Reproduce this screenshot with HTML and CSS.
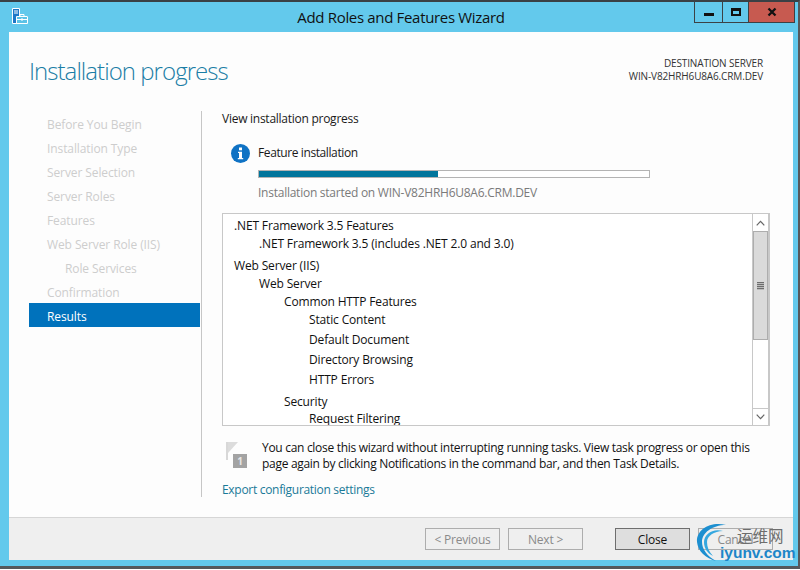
FILE: index.html
```html
<!DOCTYPE html>
<html lang="en">
<head>
<meta charset="utf-8">
<title>Add Roles and Features Wizard</title>
<link rel="stylesheet" href="styles.css">
</head>
<body>
<div class="window">
  <header class="titlebar">
    <svg class="app-icon" width="17" height="17" viewBox="0 0 17 17">
      <path d="M1.500 .5h7v15h-7z" fill="#1f78c8" stroke="#fff"/>
      <path d="M3 3h4M3 5h4" stroke="#fff"/>
      <path d="M5.500 8.500h10.500a.5 .5 0 0 1 .5 .5v6.500h-11z" fill="#5cc2e6" stroke="#fff"/>
      <path d="M9 8V6.500h4V8M6 11.500h10" stroke="#fff" fill="none"/>
      <path d="M10 10.500h2v2h-2z" fill="#fff"/>
    </svg>
    <div class="title">Add Roles and Features Wizard</div>
    <div class="controls">
      <div class="ctl ctl-min"><span class="min-glyph"></span></div>
      <div class="ctl ctl-max"><span class="max-glyph"></span></div>
      <div class="ctl ctl-close">
        <svg width="10" height="10" viewBox="0 0 10 10"><path d="M1.500 1.500l7 7M8.500 1.500l-7 7" stroke="#111" stroke-width="2.300"/></svg>
      </div>
    </div>
  </header>
  <div class="client">
    <div class="head">
      <h1 class="page-title">Installation progress</h1>
      <div class="dest">
        <div>DESTINATION SERVER</div>
        <div>WIN-V82HRH6U8A6.CRM.DEV</div>
      </div>
    </div>
    <div class="body">
      <nav class="steps">
        <div class="step">Before You Begin</div>
        <div class="step">Installation Type</div>
        <div class="step">Server Selection</div>
        <div class="step">Server Roles</div>
        <div class="step">Features</div>
        <div class="step">Web Server Role (IIS)</div>
        <div class="step step-sub">Role Services</div>
        <div class="step">Confirmation</div>
        <div class="step step-on">Results</div>
      </nav>
      <main class="main">
        <div class="view-label">View installation progress</div>
        <div class="status">
          <svg class="info" width="19" height="19" viewBox="0 0 19 19">
            <circle cx="9.500" cy="9.500" r="9.500" fill="#0f72c4"/>
            <rect x="8" y="3.500" width="3" height="2.800" fill="#fff"/>
            <path d="M7 7.800h4v6.200h1.200v1.300H6.800V14H8V9.100H7z" fill="#fff"/>
          </svg>
          <div class="status-text">
            <div class="status-name">Feature installation</div>
            <div class="bar"><div class="bar-fill" style="width:46%"></div></div>
            <div class="status-note">Installation started on WIN-V82HRH6U8A6.CRM.DEV</div>
          </div>
        </div>
        <div class="results">
          <div class="tree">
            <div class="row l0">.NET Framework 3.5 Features</div>
            <div class="row l1">.NET Framework 3.5 (includes .NET 2.0 and 3.0)</div>
            <div class="row l0 gap4">Web Server (IIS)</div>
            <div class="row l1">Web Server</div>
            <div class="row l2">Common HTTP Features</div>
            <div class="row l3">Static Content</div>
            <div class="row l3 gap2">Default Document</div>
            <div class="row l3 gap2">Directory Browsing</div>
            <div class="row l3 gap2">HTTP Errors</div>
            <div class="row l2 gap4">Security</div>
            <div class="row l3 tight">Request Filtering</div>
          </div>
          <div class="scrollbar">
            <div class="sb-btn">
              <svg width="9" height="6" viewBox="0 0 9 6"><path d="M.7 5.300l3.800-4 3.800 4" fill="none" stroke="#666" stroke-width="1.200"/></svg>
            </div>
            <div class="sb-thumb"><span class="grip"></span></div>
            <div class="sb-track"></div>
            <div class="sb-btn sb-btn-down">
              <svg width="9" height="6" viewBox="0 0 9 6"><path d="M.7 .7l3.800 4 3.800-4" fill="none" stroke="#666" stroke-width="1.200"/></svg>
            </div>
          </div>
        </div>
        <div class="notice">
          <svg class="flag" width="22" height="26" viewBox="0 0 22 26">
            <path d="M1 0h2v18H1z" fill="#d8d8d8"/>
            <path d="M3 0h10L3 11z" fill="#dcdcdc"/>
            <rect x="8" y="12" width="14" height="14" fill="#a3a3a3"/>
            <text x="15" y="23" class="flag-num">1</text>
          </svg>
          <p class="notice-text">You can close this wizard without interrupting running tasks. View task progress or open this page again by clicking Notifications in the command bar, and then Task Details.</p>
        </div>
        <a class="export">Export configuration settings</a>
      </main>
    </div>
    <footer class="footer">
      <button class="btn btn-off">&lt; Previous</button>
      <button class="btn btn-off">Next &gt;</button>
      <button class="btn btn-main">Close</button>
      <button class="btn btn-off btn-cancel">Cancel</button>
    </footer>
  </div>
</div>
<div class="watermark">
  <svg class="wm-swirl" width="48" height="48" viewBox="0 0 48 48">
    <path d="M30 3C14-1 0 8 1 20c1 9 8 16 19 19C11 34 6 27 6 20 6 11 16 3 30 3z" fill="#1d8fd0"/>
    <path d="M27 9C17 6 8 12 8 20c0 6 3 11 9 14-4-4-6-9-6-14 0-6 7-11 16-11z" fill="#35a7df"/>
  </svg>
  <div class="wm-cn">运维网</div>
  <div class="wm-en">iyunv.com</div>
</div>
</body>
</html>
```
FILE: styles.css
```css
* { box-sizing: border-box; }
html, body { margin: 0; padding: 0; }
body {
  width: 800px;
  height: 570px;
  position: relative;
  overflow: hidden;
  background: #fff;
  font-family: "Open Sans", "Noto Sans", sans-serif;
  font-size: 12px;
  color: #1a1a1a;
}
.window {
  width: 800px;
  height: 569px;
  display: flex;
  flex-direction: column;
  background: #63c9ec;
  border-top: 2px solid #3a4045;
  border-right: 2px solid #55595c;
  border-bottom: 3px solid #55595c;
  padding: 0 5px 6px 9px;
}
.titlebar {
  height: 30px;
  flex: none;
  display: flex;
  align-items: flex-start;
  position: relative;
}
.app-icon { position: absolute; left: 2px; top: 6px; }
.title {
  width: 100%;
  padding: 6px 0 0 0;
  text-align: center;
  font-size: 15px;
  line-height: 18px;
  color: #111;
  letter-spacing: -.33px;
}
.controls {
  position: absolute;
  top: 0;
  right: -2px;
  display: flex;
  height: 21px;
  border: 1px solid #3c4144;
  border-top: 0;
}
.ctl { display: flex; align-items: center; justify-content: center; height: 20px; }
.ctl-min { width: 28px; border-right: 1px solid #3c4144; }
.ctl-max { width: 26px; border-right: 1px solid #3c4144; }
.ctl-close { width: 45px; background: #c75a50; }
.min-glyph { width: 10px; height: 3px; background: #111; margin-top: 5px; }
.max-glyph { width: 10px; height: 8px; border: 2px solid #111; border-top-width: 3px; }
.client {
  flex: 1;
  display: flex;
  flex-direction: column;
  background: #fdfdfd;
  min-height: 0;
}
.head {
  height: 79px;
  flex: none;
  display: flex;
  justify-content: space-between;
  padding: 0 30px 0 20px;
}
.page-title {
  margin: 23px 0 0;
  font-size: 24px;
  line-height: 32px;
  font-weight: 300;
  color: #1b7ea6;
  letter-spacing: -.95px;
}
.dest {
  margin-top: 25px;
  font-size: 10px;
  line-height: 13px;
  text-align: right;
  color: #333;
  letter-spacing: -.14px;
}
.body { flex: 1; display: flex; min-height: 0; padding-left: 20px; }
.steps { width: 172px; flex: none; }
.step {
  height: 24px;
  line-height: 28px;
  padding-left: 18px;
  color: #cdcdcd;
  letter-spacing: -.1px;
}
.step-sub { padding-left: 36px; }
.step-on { background: #0072bc; color: #fff; width: 171px; }
.main {
  flex: 1;
  min-width: 0;
  border-left: 1px solid #c6c6c6;
  margin-bottom: 20px;
  padding-left: 20px;
  padding-right: 23px;
}
.view-label { line-height: 16px; letter-spacing: -.26px; color: #1a1a1a; }
.status { display: flex; margin: 16px 0 0 9px; height: 70px; }
.info { flex: none; margin-top: 1px; }
.status-text { margin-left: 8px; flex: 1; }
.status-name { line-height: 16px; margin-top: 2px; letter-spacing: -.4px; }
.bar {
  width: 392px;
  height: 8px;
  margin-top: 9px;
  background: #fff;
  border: 1px solid #b3b3b3;
}
.bar-fill { height: 100%; background: #00759c; }
.status-note { margin-top: 7px; line-height: 16px; color: #7a7a7a; letter-spacing: -.25px; }
.results {
  height: 213px;
  width: 548px;
  display: flex;
  border: 1px solid #c8c8c8;
  border-right-width: 2px;
  background: #fff;
  overflow: hidden;
}
.tree { flex: 1; padding-top: 3px; overflow: hidden; min-width: 0; }
.row {
  height: 18px;
  line-height: 18px;
  color: #111;
  white-space: nowrap;
  letter-spacing: -.15px;
  font-weight: 500;
}
.l0 { padding-left: 11px; }
.l1 { padding-left: 36px; }
.l2 { padding-left: 61px; }
.l3 { padding-left: 86px; }
.gap2 { margin-top: 2px; }
.gap4 { margin-top: 4px; }
.tight { margin-top: -1px; }
.scrollbar {
  width: 16px;
  flex: none;
  display: flex;
  flex-direction: column;
  border-left: 1px solid #c8c8c8;
}
.sb-btn {
  height: 17px;
  flex: none;
  display: flex;
  align-items: center;
  justify-content: center;
}
.sb-btn-down { border-top: 1px solid #c8c8c8; }
.sb-thumb {
  height: 109px;
  flex: none;
  background: #dadada;
  border: 1px solid #adadad;
  display: flex;
  align-items: center;
  justify-content: center;
}
.grip {
  width: 7px;
  height: 8px;
  background: repeating-linear-gradient(#6e6e6e 0 1px, #bcbcbc 1px 2px);
}
.sb-track { flex: 1; }
.notice { display: flex; margin: 16px 0 0 3px; }
.flag { flex: none; }
.flag-num {
  font-size: 10px;
  font-weight: 700;
  fill: #e6e6e6;
  text-anchor: middle;
}
.notice-text {
  margin: -2px 0 0 15px;
  width: 500px;
  line-height: 16px;
  letter-spacing: -.3px;
  color: #111;
}
.export {
  display: block;
  margin-top: 10px;
  line-height: 16px;
  color: #1a7a98;
  letter-spacing: -.3px;
}
.footer {
  height: 43px;
  flex: none;
  background: #efefef;
  border-top: 1px solid #d6d6d6;
  display: flex;
  justify-content: flex-end;
  align-items: flex-start;
  gap: 8px;
  padding: 10px 20px 0 0;
}
.btn {
  width: 75px;
  height: 22px;
  padding: 0;
  font: inherit;
  letter-spacing: -.2px;
  background: transparent;
  border: 1px solid #adadad;
  color: #8a8a8a;
}
.btn-main {
  background: #dedede;
  border-color: #6e6e6e;
  color: #111;
  margin-left: 24px;
}
.watermark {
  position: absolute;
  left: 696px;
  top: 522px;
  width: 104px;
  height: 48px;
}
.wm-swirl { position: absolute; left: 0; top: 0; }
.wm-cn {
  position: absolute;
  left: 41px;
  top: 3px;
  font-family: "Noto Sans CJK SC", sans-serif;
  font-size: 15.5px;
  line-height: 20px;
  color: #6d6d6d;
}
.wm-en {
  position: absolute;
  left: 24px;
  top: 21px;
  font-family: "Liberation Sans", sans-serif;
  font-size: 15.5px;
  line-height: 20px;
  font-weight: 700;
  color: #1d86c8;
}
```
